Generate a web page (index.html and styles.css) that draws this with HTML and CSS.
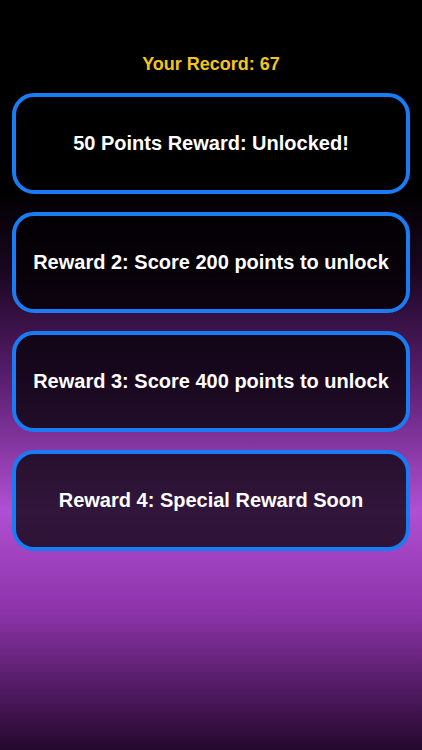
FILE: index.html
```html
<!DOCTYPE html>
<html>
<head>
<meta charset="utf-8">
<link rel="stylesheet" href="styles.css">
</head>
<body>
<main class="screen">
  <h1 class="record">Your Record: 67</h1>
  <ul class="rewards">
    <li class="card">50 Points Reward: Unlocked!</li>
    <li class="card">Reward 2: Score 200 points to unlock</li>
    <li class="card">Reward 3: Score 400 points to unlock</li>
    <li class="card">Reward 4: Special Reward Soon</li>
  </ul>
</main>
</body>
</html>
```
FILE: styles.css
```css
html, body {
  margin: 0;
  padding: 0;
  height: 100%;
}
body {
  font-family: "Liberation Sans", Arial, sans-serif;
  background: linear-gradient(to bottom,
    #000000 0px,
    #000000 190px,
    #1a0620 270px,
    #5a1e70 380px,
    #b04fd2 510px,
    #8e34aa 610px,
    #501a62 690px,
    #24082c 750px);
  min-height: 750px;
}
.screen {
  display: flex;
  flex-direction: column;
  padding: 52px 12px 0 12px;
}
.record {
  margin: 0;
  text-align: center;
  color: #f4c41b;
  font-size: 18px;
  font-weight: bold;
  line-height: 24px;
}
.rewards {
  list-style: none;
  margin: 17px 0 0 0;
  padding: 0;
  display: flex;
  flex-direction: column;
  gap: 18px;
}
.card {
  box-sizing: border-box;
  height: 101px;
  border: 4px solid #1a7cf4;
  border-radius: 22px;
  background: rgba(0, 0, 0, 0.72);
  color: #ffffff;
  font-size: 20px;
  font-weight: bold;
  display: flex;
  align-items: center;
  justify-content: center;
  text-align: center;
}
```
